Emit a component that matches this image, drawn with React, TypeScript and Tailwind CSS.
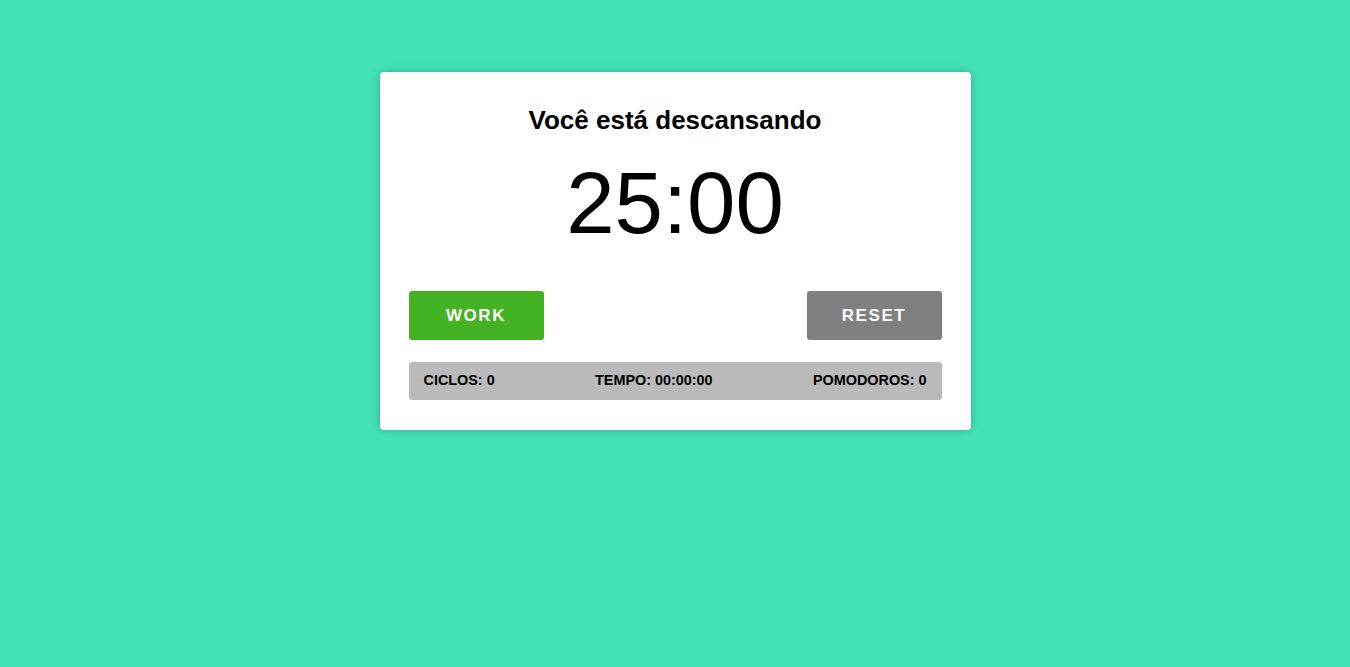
export default function App() {
  return (
    <div
      className="min-h-screen w-full bg-[#44e2b9] pt-[72px]"
      style={{ fontFamily: '"Liberation Sans", Arial, sans-serif' }}
    >
      <div className="mx-auto w-[591px] rounded-[4px] bg-white px-[29px] pt-[30px] pb-[30px] shadow-[0_0_10px_rgba(0,0,0,0.25)]">
        <h1 className="text-center text-[26px] font-bold leading-[36px] text-black">
          Você está descansando
        </h1>
        <div className="mt-[4px] text-center text-[87px] leading-[122px] text-black">25:00</div>
        <div className="mt-[27px] flex justify-between">
          <button className="h-[49px] w-[135px] rounded-[3px] bg-[#43b324] text-[17px] font-bold tracking-[1.6px] text-white">
            WORK
          </button>
          <button className="h-[49px] w-[135px] rounded-[3px] bg-[#808080] text-[17px] font-bold tracking-[1.6px] text-white">
            RESET
          </button>
        </div>
        <div className="mt-[22px] flex h-[38px] items-center justify-between rounded-[3px] bg-[#bababa] px-[15px] text-[14.4px] font-bold text-black">
          <span>CICLOS: 0</span>
          <span>TEMPO: 00:00:00</span>
          <span>POMODOROS: 0</span>
        </div>
      </div>
    </div>
  );
}
